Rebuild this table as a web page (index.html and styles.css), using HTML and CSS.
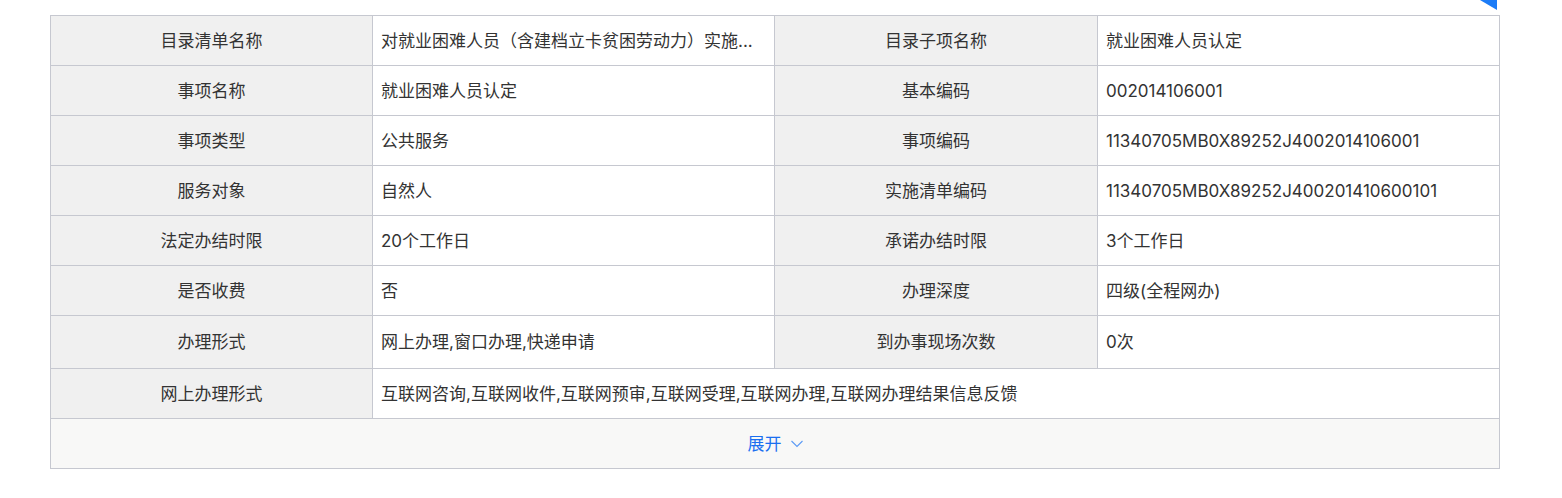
FILE: index.html
```html
<!DOCTYPE html>
<html lang="zh-CN">
<head>
<meta charset="utf-8">
<title>事项详情</title>
<link rel="stylesheet" href="styles.css">
</head>
<body>
<div class="corner"><svg width="20" height="10" viewBox="0 0 20 10"><polygon points="0,0 17,0 17,10" fill="#1c7cf7"/></svg></div>
<div class="wrap">
  <table class="info">
    <colgroup>
      <col class="c-label"><col class="c-value"><col class="c-label2"><col class="c-value">
    </colgroup>
    <tbody>
      <tr>
        <th>目录清单名称</th><td>对就业困难人员（含建档立卡贫困劳动力）实施...</td>
        <th>目录子项名称</th><td>就业困难人员认定</td>
      </tr>
      <tr>
        <th>事项名称</th><td>就业困难人员认定</td>
        <th>基本编码</th><td>002014106001</td>
      </tr>
      <tr>
        <th>事项类型</th><td>公共服务</td>
        <th>事项编码</th><td>11340705MB0X89252J4002014106001</td>
      </tr>
      <tr>
        <th>服务对象</th><td>自然人</td>
        <th>实施清单编码</th><td>11340705MB0X89252J400201410600101</td>
      </tr>
      <tr>
        <th>法定办结时限</th><td>20个工作日</td>
        <th>承诺办结时限</th><td>3个工作日</td>
      </tr>
      <tr>
        <th>是否收费</th><td>否</td>
        <th>办理深度</th><td>四级(全程网办)</td>
      </tr>
      <tr class="tall">
        <th>办理形式</th><td>网上办理,窗口办理,快递申请</td>
        <th>到办事现场次数</th><td>0次</td>
      </tr>
      <tr>
        <th>网上办理形式</th><td colspan="3">互联网咨询,互联网收件,互联网预审,互联网受理,互联网办理,互联网办理结果信息反馈</td>
      </tr>
      <tr class="more-row">
        <td colspan="4" class="more"><span class="more-btn">展开<svg class="chev" width="12" height="8" viewBox="0 0 12 8"><polyline points="0.5,1 6,6.5 11.5,1" fill="none" stroke="#5b9af5" stroke-width="1.1"/></svg></span></td>
      </tr>
    </tbody>
  </table>
</div>
</body>
</html>
```
FILE: styles.css
```css
html, body {
  margin: 0;
  padding: 0;
  background: #ffffff;
}
body {
  font-family: "Inter", "Noto Sans CJK SC", "Noto Sans", sans-serif;
  color: #333333;
  position: relative;
}
.corner {
  position: absolute;
  top: 0;
  left: 1480px;
  line-height: 0;
}
.wrap {
  padding: 15px 0 0 50px;
}
.info {
  width: 1450px;
  border-collapse: collapse;
  table-layout: fixed;
  font-size: 17px;
}
.c-label { width: 322px; }
.c-label2 { width: 323px; }
.c-value { width: 402px; }
.info th,
.info td {
  border: 1px solid #c6c8d0;
  height: 49px;
  padding: 0 8px;
  vertical-align: middle;
  white-space: nowrap;
  line-height: 20px;
}
.info th {
  background: #f0f0f0;
  font-weight: normal;
  text-align: center;
  color: #333333;
}
.info td {
  background: #ffffff;
  text-align: left;
}
.info tr.tall th,
.info tr.tall td {
  height: 52px;
}
.info td.more {
  background: #f8f8f7;
  text-align: center;
}
.more-btn {
  display: inline-flex;
  align-items: center;
  gap: 9px;
  color: #1a6ff0;
}
.chev {
  display: block;
}
```
